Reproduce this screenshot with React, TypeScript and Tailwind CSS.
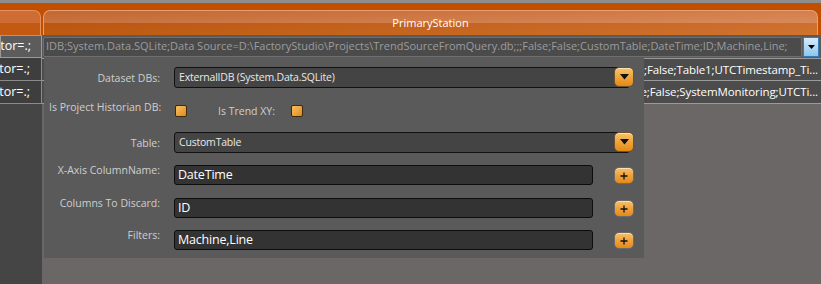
import React from "react";

const font = { fontFamily: '"Open Sans", "Noto Sans", "Liberation Sans", sans-serif' };

function OrangeDrop() {
  return (
    <div className="w-[20px] h-[20px] rounded-[5px] border border-[#6b5330] bg-gradient-to-b from-[#f7c46a] via-[#f0a43a] to-[#e48a14] flex items-center justify-center shadow-[inset_0_1px_0_rgba(255,255,255,0.5)]">
      <svg width="9" height="6" viewBox="0 0 9 6">
        <path d="M0 0 H9 L4.5 5.5 Z" fill="#111" />
      </svg>
    </div>
  );
}

function PlusBtn() {
  return (
    <div className="w-[20px] h-[17px] rounded-[5px] border border-[#6b6b6b] bg-gradient-to-b from-[#f6c06a] via-[#f0a23a] to-[#e48a14] flex items-center justify-center shadow-[inset_0_1px_0_rgba(255,255,255,0.5)]">
      <svg width="8" height="8" viewBox="0 0 8 8">
        <path d="M4 0.5 V7.5 M0.5 4 H7.5" stroke="#111" strokeWidth="1.3" />
      </svg>
    </div>
  );
}

function Check() {
  return (
    <div className="w-[12px] h-[12px] rounded-[2px] border border-[#3a2a10] bg-gradient-to-br from-[#f8c060] to-[#e08a10]" />
  );
}

function Combo({ text }: { text: string }) {
  return (
    <div className="relative w-[461px] h-[21px]">
      <div className="w-[456px] h-[21px] rounded-[3px] border border-[#111] bg-[#444444] flex items-center pl-[4px] text-[10.5px] tracking-[-0.2px] text-[#e8e8e8]">
        {text}
      </div>
      <div className="absolute right-[1px] top-0">
        <OrangeDrop />
      </div>
    </div>
  );
}

function TextRow({ label, value }: { label: string; value: string }) {
  return (
    <div className="flex items-start h-[20px]">
      <div className="w-[116px] text-right text-[10.5px] text-[#cfcfcf] leading-[14px] -mt-[2px]">{label}</div>
      <div className="ml-[14px] w-[419px] h-[20px] rounded-[3px] border border-[#0d0d0d] bg-[#333333] flex items-center pl-[3px] text-[12.5px] tracking-[-0.2px] text-white">
        {value}
      </div>
      <div className="ml-[21px] mt-[2px]">
        <PlusBtn />
      </div>
    </div>
  );
}

export default function App() {
  return (
    <div className="relative w-[821px] h-[284px] overflow-hidden bg-gradient-to-r from-[#454545] via-[#5c5c5c] to-[#6a6766]" style={font}>
      <div className="h-[3px] bg-[#8e8e8e]" />
      <div className="h-[32px] bg-[#c24e00] flex items-end">
        <div className="w-[41px] h-[25px] rounded-tr-[7px] border-t border-r border-[#e3925e] bg-[linear-gradient(to_bottom,#ce6c34_0%,#ce6c34_50%,#c45912_50%,#c45912_100%)]" />
        <div className="ml-[2px] w-[775px] h-[25px] rounded-t-[7px] border-t border-l border-r border-[#e8a070] bg-[linear-gradient(to_right,rgba(0,0,0,0.06),rgba(255,255,255,0.12)),linear-gradient(to_bottom,#cf6d36_0%,#d47a42_50%,#c65b14_50%,#c96010_100%)] flex items-start justify-center pt-[5px]">
          <span className="text-[11px] text-white leading-[14px]">PrimaryStation</span>
        </div>
      </div>
      {/* grid rows */}
      <div className="flex">
        <div className="w-[42px] flex flex-col bg-[#454545]">
          <div className="h-[23px] bg-[#5c5c5c] border border-[#9a9a9a] flex items-center justify-end pr-[10px] text-[12.5px] text-white whitespace-nowrap overflow-hidden">Separator=.;</div>
          <div className="h-[23px] bg-[#3e3e3e] border-b border-r border-[#8a8a8a] flex items-center justify-end pr-[11px] text-[12.5px] text-white whitespace-nowrap overflow-hidden">Separator=.;</div>
          <div className="h-[23px] bg-[#3e3e3e] border-b border-r border-[#8a8a8a] flex items-center justify-end pr-[11px] text-[12.5px] text-white whitespace-nowrap overflow-hidden">Separator=.;</div>
        </div>
        <div className="flex-1 flex flex-col">
          <div className="h-[23px] bg-[#5a5a5a] flex items-center pl-[1px] pr-[2px]">
            <div className="w-[759px] h-[20px] rounded-[2px] border border-[#6e6e6e] bg-[#4b4b4b] flex items-center pl-[2px] text-[11px] text-[#9c9c9c] whitespace-nowrap overflow-hidden">
              IDB;System.Data.SQLite;Data Source=D:\FactoryStudio\Projects\TrendSourceFromQuery.db;;;False;False;CustomTable;DateTime;ID;Machine,Line;
            </div>
            <div className="ml-auto w-[16px] h-[20px] border border-[#3a7ab0] bg-gradient-to-b from-[#d6ecfb] to-[#8cc6ee] flex items-center justify-center">
              <svg width="7" height="4" viewBox="0 0 7 4"><path d="M0 0 H7 L3.5 4 Z" fill="#000" /></svg>
            </div>
          </div>
          <div className="h-[23px] bg-[#4c4c4c] border-t border-b border-[#9a9a9a] flex items-center justify-end pr-[3px] text-[11.5px] tracking-[-0.1px] text-white whitespace-nowrap overflow-hidden">
            e;False;Table1;UTCTimestamp_Ti...
          </div>
          <div className="h-[23px] bg-[#4c4c4c] border-b border-[#9a9a9a] flex items-center justify-end pr-[3px] text-[11.5px] tracking-[-0.1px] text-white whitespace-nowrap overflow-hidden">
            e;False;SystemMonitoring;UTCTi...
          </div>
          <div className="h-[180px] bg-[#6a6766]" />
        </div>
      </div>

      {/* popup panel */}
      <div className="absolute left-[44px] top-[58px] w-[600px] h-[200px] bg-[#5a5a5a] pt-[9px] flex flex-col">
        <div className="flex items-center h-[21px]">
          <div className="w-[116px] text-right text-[10.5px] text-[#cfcfcf] pt-[2px]">Dataset DBs:</div>
          <div className="ml-[14px]"><Combo text="ExternalIDB (System.Data.SQLite)" /></div>
        </div>
        <div className="flex items-start mt-[12px] h-[20px]">
          <div className="w-[116px] pl-[5px] text-[10.5px] text-[#cfcfcf] leading-[14px] whitespace-nowrap">Is Project Historian DB:</div>
          <div className="ml-[15px] mt-[5px]"><Check /></div>
          <div className="ml-[31px] mt-[4px] text-[10.5px] text-[#cfcfcf] leading-[14px]">Is Trend XY:</div>
          <div className="ml-[16px] mt-[5px]"><Check /></div>
        </div>
        <div className="flex items-center mt-[12px] h-[21px]">
          <div className="w-[116px] text-right text-[10.5px] text-[#cfcfcf] pt-[2px]">Table:</div>
          <div className="ml-[14px]"><Combo text="CustomTable" /></div>
        </div>
        <div className="mt-[12px]"><TextRow label="X-Axis ColumnName:" value="DateTime" /></div>
        <div className="mt-[13px]"><TextRow label="Columns To Discard:" value="ID" /></div>
        <div className="mt-[12px]"><TextRow label="Filters:" value="Machine,Line" /></div>
      </div>
    </div>
  );
}
